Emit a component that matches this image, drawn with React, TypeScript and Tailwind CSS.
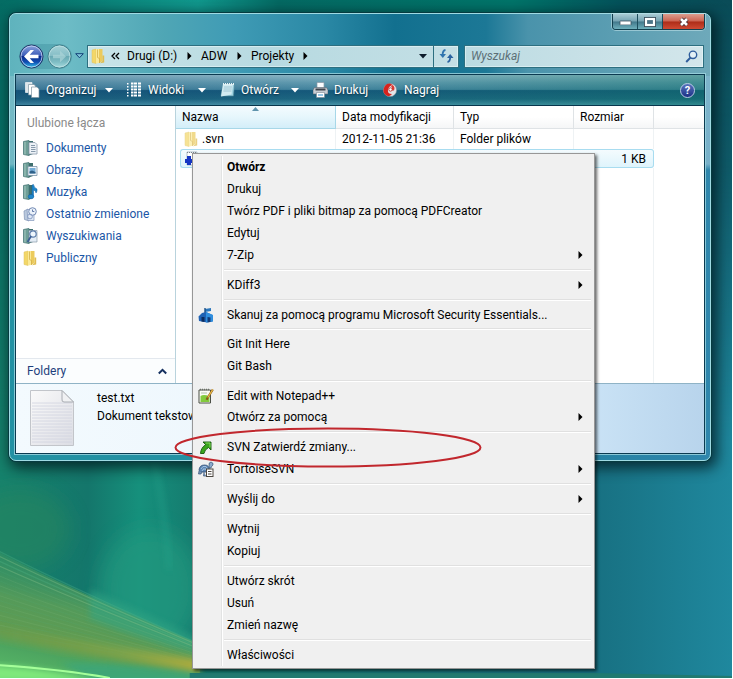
import React from "react";

/* ---------- small glyphs ---------- */

function ArrowRight({ className = "text-black" }: { className?: string }) {
  return (
    <svg width="5" height="8" viewBox="0 0 5 8" className={className} aria-hidden="true">
      <path d="M0.5 0 L4.5 4 L0.5 8 Z" fill="currentColor" />
    </svg>
  );
}

function CaretDown({ className = "" }: { className?: string }) {
  return (
    <svg width="8" height="5" viewBox="0 0 8 5" className={className} aria-hidden="true">
      <path d="M0 0 H8 L4 4.5 Z" fill="currentColor" />
    </svg>
  );
}

function FolderIcon({ pale = false }: { pale?: boolean }) {
  return (
    <svg width="14" height="16" viewBox="0 0 14 16" aria-hidden="true" className={pale ? "opacity-70" : ""}>
      <path d="M1 2 L5 1 V15.5 L1 14.5 Z" fill="#f3d768" stroke="#dcc160" strokeWidth="0.5" />
      <path d="M5 1 H8 V15 L5 15.5 Z" fill="#fbe997" />
      <path d="M8 1 H11.5 V13 L8 15 Z" fill="#eccb5c" />
      <path d="M6.500 1.500 V9.500 L8.500 10.500 V15" fill="none" stroke="#d3b04a" strokeWidth="0.8" />
      <path d="M11.500 7.500 H13.200 V14.500 L9 15.300 L11.500 13 Z" fill="#e0bd50" />
    </svg>
  );
}

type LinkKind = "doc" | "pic" | "music" | "recent" | "search" | "public";

function LinkIcon({ kind }: { kind: LinkKind }) {
  if (kind === "public") {
    return (
      <span className="flex w-[15px]">
        <FolderIcon />
      </span>
    );
  }
  if (kind === "recent") {
    return (
      <svg width="15" height="16" viewBox="0 0 15 16" aria-hidden="true">
        <path d="M1 5 L5 3 L6 15 L1.5 13.500 Z" fill="#b9c8dd" stroke="#7f93b5" strokeWidth="0.7" />
        <path d="M4 3.5 H9 L11 5 V14.500 H5 Z" fill="#dfe8f5" stroke="#8397ba" strokeWidth="0.7" />
        <circle cx="9.5" cy="5.5" r="3.8" fill="#eaf1fa" stroke="#7289b3" />
        <path d="M9.5 3.5 V5.5 H11.3" fill="none" stroke="#415f95" strokeWidth="0.8" />
        <circle cx="7" cy="10.5" r="2.4" fill="none" stroke="#8ca0c6" />
      </svg>
    );
  }
  return (
    <svg width="15" height="16" viewBox="0 0 15 16" aria-hidden="true">
      <path d="M0.5 1.5 L6 0.5 V15.5 L0.5 14.5 Z" fill="#6e9f97" stroke="#4b7a78" strokeWidth="0.8" />
      <path d="M2 2 V14.3" stroke="#a5c8c0" strokeWidth="1" />
      <path d="M6 1 H10 V14 L6 15.5 Z" fill="#3f706e" />
      {kind === "doc" && (
        <g>
          <path d="M6 2.5 H12 L14 4.5 V14 H6 Z" fill="#edf2f7" stroke="#8a9bab" strokeWidth="0.8" />
          <path d="M8 5.5 H12 M8 7.5 H12.5 M8 9.5 H12.5 M8 11.5 H12.5" stroke="#7c8ea1" strokeWidth="0.9" />
        </g>
      )}
      {kind === "pic" && (
        <g>
          <path d="M5 4.5 H14 V13.5 H5 Z" fill="#f2f7fb" stroke="#7f95a8" strokeWidth="0.8" />
          <path d="M6.5 6 H12.5 V11.5 H6.5 Z" fill="#76add6" />
          <path d="M6.5 9.5 L9 8.5 L12.5 10 V11.5 H6.5 Z" fill="#2f6088" />
        </g>
      )}
      {kind === "music" && (
        <g fill="#1e86cb" stroke="#0f5d9c" strokeWidth="0.5">
          <path d="M9 1 L10.5 0.5 Q11 4 14 5 Q14.5 7 13 9 Q13 6.5 10.5 6 V12.5 H9 Z" />
          <ellipse cx="8" cy="12.6" rx="2.8" ry="2.2" />
        </g>
      )}
      {kind === "search" && (
        <g>
          <path d="M6 2.5 H14 V14 H6 Z" fill="#e4edf6" stroke="#8a9bab" strokeWidth="0.7" />
          <circle cx="10" cy="6" r="3.2" fill="#eef6fd" stroke="#5b7ba8" strokeWidth="1.2" />
          <path d="M8 8.3 L4.5 14" stroke="#3c5f95" strokeWidth="1.8" />
        </g>
      )}
    </svg>
  );
}

function NavBall({ dim = false }: { dim?: boolean }) {
  const id = dim ? "ballForward" : "ballBack";
  return (
    <svg width="25" height="25" viewBox="0 0 25 25" aria-hidden="true">
      <defs>
        <linearGradient id={id} x1="0" y1="0" x2="0" y2="1">
          <stop offset="0" stopColor={dim ? "#a6d2d7" : "#8ea5de"} />
          <stop offset="0.46" stopColor={dim ? "#86bec7" : "#3c5cb8"} />
          <stop offset="0.5" stopColor={dim ? "#6aaab4" : "#0b2a8c"} />
          <stop offset="0.75" stopColor={dim ? "#80bec5" : "#1250b4"} />
          <stop offset="1" stopColor={dim ? "#a8dcdf" : "#35d0f0"} />
        </linearGradient>
      </defs>
      <circle cx="12.5" cy="12.5" r="11.5" fill={`url(#${id})`} stroke={dim ? "#3f7d89" : "#1e3568"} strokeWidth="1" />
      <circle cx="12.5" cy="12.5" r="10.5" fill="none" stroke={dim ? "#c0e2e5" : "#c9d7f2"} strokeWidth="1" opacity="0.8" />
      {dim ? (
        <path d="M19 12.5 L13 6.8 V10.8 H6 V14.2 H13 V18.2 Z" fill="#a9d3d7" opacity="0.75" />
      ) : (
        <path d="M5 12.5 L11.5 6 H15 L10.8 10.8 H19.5 V14.2 H10.8 L15 19 H11.5 Z" fill="#fff" />
      )}
    </svg>
  );
}

/* ---------- wallpaper ---------- */

function Wallpaper() {
  const rays = Array.from({ length: 17 }, (_, i) => i);
  return (
    <svg
      className="absolute inset-0 h-full w-full"
      viewBox="0 0 733 679"
      preserveAspectRatio="none"
      aria-hidden="true"
    >
      <defs>
        <linearGradient id="wpBase" x1="0" y1="0" x2="1" y2="0">
          <stop offset="0" stopColor="#16826c" />
          <stop offset="0.12" stopColor="#14766b" />
          <stop offset="0.19" stopColor="#16907c" />
          <stop offset="0.27" stopColor="#157a6e" />
          <stop offset="0.8" stopColor="#176f80" />
          <stop offset="1" stopColor="#1f889e" />
        </linearGradient>
        <linearGradient id="wpTop" x1="0" y1="0" x2="1" y2="0">
          <stop offset="0" stopColor="#046b63" />
          <stop offset="0.27" stopColor="#10998e" />
          <stop offset="0.38" stopColor="#046a63" />
          <stop offset="0.7" stopColor="#00756a" />
          <stop offset="0.85" stopColor="#04525a" />
          <stop offset="1" stopColor="#0a4b57" />
        </linearGradient>
        <linearGradient id="wpFade" x1="0" y1="0" x2="0" y2="1">
          <stop offset="0" stopColor="#fff" />
          <stop offset="0.25" stopColor="#bbb" />
          <stop offset="0.65" stopColor="#000" />
        </linearGradient>
        <mask id="wpMask">
          <rect width="733" height="679" fill="url(#wpFade)" />
        </mask>
        <linearGradient id="wpGreen" gradientUnits="userSpaceOnUse" x1="30" y1="550" x2="0" y2="690">
          <stop offset="0" stopColor="#2f9168" stopOpacity="0.5" />
          <stop offset="0.35" stopColor="#539a5a" />
          <stop offset="0.6" stopColor="#629c50" />
          <stop offset="0.7" stopColor="#4da560" />
          <stop offset="1" stopColor="#5fc46c" />
        </linearGradient>
        <linearGradient id="wpGold" x1="0" y1="0" x2="1" y2="0">
          <stop offset="0" stopColor="#7e9a3e" stopOpacity="0.2" />
          <stop offset="0.6" stopColor="#84a548" stopOpacity="0.7" />
          <stop offset="1" stopColor="#b0ac3c" />
        </linearGradient>
        <filter id="soft" x="-30%" y="-30%" width="160%" height="160%">
          <feGaussianBlur stdDeviation="10" />
        </filter>
        <filter id="softer" x="-20%" y="-20%" width="140%" height="140%">
          <feGaussianBlur stdDeviation="3" />
        </filter>
      </defs>
      <rect width="733" height="679" fill="url(#wpBase)" />
      <rect width="733" height="679" fill="url(#wpTop)" mask="url(#wpMask)" />
      <ellipse cx="150" cy="590" rx="50" ry="60" fill="#22997f" opacity="0.7" filter="url(#soft)" />
      <ellipse cx="20" cy="530" rx="50" ry="40" fill="#27855f" opacity="0.6" filter="url(#soft)" />
      <path d="M155 462 Q166 520 170 570" stroke="#27a78f" strokeWidth="4" fill="none" opacity="0.5" filter="url(#softer)" />
      <path d="M-5 551 Q70 590 200 645 V700 H-20 Z" fill="url(#wpGreen)" />
      <path d="M90 590 L200 640 V655 Q140 640 90 620 Z" fill="#32a483" opacity="0.6" filter="url(#softer)" />
      <path d="M60 664 Q120 664 200 672 V690 H110 Z" fill="#3ba67c" opacity="0.8" filter="url(#softer)" />
      {rays.map((i) => (
        <path
          key={i}
          d={`M-5 ${550 + i * 5} Q70 ${588 + i * 3.6} 200 ${645 + i * 1.6}`}
          stroke={i % 2 ? "#8fc78c" : "#4fb183"}
          strokeWidth={i < 4 ? 1.2 : 0.7}
          opacity={i < 4 ? 0.35 : 0.2}
          fill="none"
        />
      ))}
      <path d="M-5 628 Q90 642 200 661 V673 Q90 656 -5 640 Z" fill="url(#wpGold)" filter="url(#softer)" />
      <path d="M-10 666 Q50 670 100 682 H-10 Z" fill="#7fe97c" filter="url(#softer)" />
      <path d="M-5 666 Q60 670 110 679" stroke="#a5ff9a" strokeWidth="2" fill="none" />
      <path d="M190 674 H595 L733 677 V679 H190 Z" fill="#217a70" />
    </svg>
  );
}

/* ---------- window title controls ---------- */

function WindowControls() {
  return (
    <div className="flex h-4 overflow-hidden rounded-b-[4px] border border-t-0 border-[#123f4e] shadow-[0_0_0_1px_rgba(190,225,232,0.6)]">
      <button
        type="button"
        aria-label="Minimalizuj"
        className="flex w-[25px] items-center justify-center border-r border-[#1c4d5c] bg-[linear-gradient(#a9cbd4,#74a3b2_48%,#41788b_52%,#6fb0bc)]"
      >
        <svg width="13" height="7" viewBox="0 0 13 7" aria-hidden="true">
          <rect x="1" y="3" width="11" height="4" rx="0.5" fill="#fff" stroke="#3a4f5d" strokeWidth="0.8" />
        </svg>
      </button>
      <button
        type="button"
        aria-label="Maksymalizuj"
        className="flex w-[25px] items-center justify-center border-r border-[#1c4d5c] bg-[linear-gradient(#a9cbd4,#74a3b2_48%,#41788b_52%,#6fb0bc)]"
      >
        <svg width="12" height="10" viewBox="0 0 12 10" aria-hidden="true">
          <rect x="2" y="2" width="8" height="6" fill="none" stroke="#3a4f5d" strokeWidth="4" />
          <rect x="2" y="2" width="8" height="6" fill="#4c7487" stroke="#fff" strokeWidth="2.2" />
        </svg>
      </button>
      <button
        type="button"
        aria-label="Zamknij"
        className="flex w-[41px] items-center justify-center bg-[linear-gradient(#dd9d8e,#cc6350_48%,#ad2c18_52%,#cf4a33)]"
      >
        <svg width="12" height="10" viewBox="0 0 12 10" aria-hidden="true">
          <path d="M3 2 L9 8 M9 2 L3 8" stroke="#4a3036" strokeWidth="4.4" />
          <path d="M3 2 L9 8 M9 2 L3 8" stroke="#fff" strokeWidth="2.6" />
        </svg>
      </button>
    </div>
  );
}

/* ---------- address bar ---------- */

function AddressRow() {
  const crumbs = [
    { label: "Drugi (D:)", width: "w-[74px]" },
    { label: "ADW", width: "w-[50px]" },
    { label: "Projekty", width: "w-[66px]" },
  ];
  return (
    <div className="flex h-[32px] items-center pr-px pl-1">
      <div className="flex h-[25px] items-center gap-[3px] rounded-full bg-[#3c8c9c]/40">
        <button type="button" aria-label="Wstecz">
          <NavBall />
        </button>
        <button type="button" aria-label="Dalej">
          <NavBall dim />
        </button>
      </div>
      <button type="button" aria-label="Ostatnie strony" className="flex w-[15px] justify-center">
        <svg width="9" height="6" viewBox="0 0 9 6" aria-hidden="true">
          <path d="M0.7 0.7 H8.3 L4.5 4.8 Z" fill="#7fc5da" stroke="#123f78" />
        </svg>
      </button>
      <nav
        aria-label="Adres"
        className="flex h-[23px] w-[372px] shrink-0 items-center border border-[#2d6f80] bg-[linear-gradient(90deg,#c9e4e8,#b7dae1_50%,#c4dfe5)] shadow-[inset_0_0_0_1px_rgba(235,250,252,0.55)]"
      >
        <span className="flex w-[20px] justify-center">
          <FolderIcon />
        </span>
        <button type="button" aria-label="Poprzednie foldery" className="flex w-[19px] justify-center pr-1">
          <svg width="9" height="8" viewBox="0 0 9 8" aria-hidden="true">
            <path d="M4 1 L1 4 L4 7 M8 1 L5 4 L8 7" fill="none" stroke="#000" strokeWidth="1.3" />
          </svg>
        </button>
        {crumbs.map((c) => (
          <button key={c.label} type="button" className={`flex ${c.width} shrink-0 items-center justify-between pr-[9px]`}>
            <span>{c.label}</span>
            <ArrowRight />
          </button>
        ))}
        <button type="button" aria-label="Historia adresów" className="mr-[6px] ml-auto">
          <CaretDown className="text-[#0d1c2c]" />
        </button>
        <button
          type="button"
          aria-label="Odśwież"
          className="flex h-full w-[25px] items-center justify-center border-l border-[#2d6f80]"
        >
          <svg width="15" height="14" viewBox="0 0 15 14" aria-hidden="true">
            <path d="M6.5 1 Q3.6 1.4 3.6 6" fill="none" stroke="#2f74ae" strokeWidth="1.8" />
            <path d="M0.5 5 H7 L3.8 9 Z" fill="#2f74ae" />
            <path d="M8.5 13 Q11.2 12.6 11.2 8" fill="none" stroke="#2a62a0" strokeWidth="1.8" />
            <path d="M8 9 H14.5 L11.2 5 Z" fill="#2a62a0" />
          </svg>
        </button>
      </nav>
      <label className="ml-[5px] flex h-[23px] min-w-0 flex-1 items-center border border-[#2d6f80] bg-[linear-gradient(90deg,#bbdbe2,#d3e6eb)] pr-[5px] pl-[6px] shadow-[inset_0_0_0_1px_rgba(235,250,252,0.55)]">
        <input
          type="text"
          aria-label="Wyszukaj"
          placeholder="Wyszukaj"
          className="min-w-0 flex-1 bg-transparent italic outline-none placeholder:text-[#5d7077]"
        />
        <svg width="13" height="13" viewBox="0 0 13 13" aria-hidden="true">
          <circle cx="8" cy="4.8" r="3.7" fill="#e4f1f6" stroke="#2f5d9c" strokeWidth="1.4" />
          <path d="M5.4 7.6 L1.2 12" stroke="#2f5d9c" strokeWidth="2" />
        </svg>
      </label>
    </div>
  );
}

/* ---------- command bar ---------- */

function OrganizeIcon() {
  return (
    <svg width="15" height="16" viewBox="0 0 15 16" aria-hidden="true">
      <path d="M0.5 0.5 H7 V10.5 H0.5 Z" fill="#dfe6ea" stroke="#fff" strokeWidth="0.6" />
      <path d="M3.5 2.5 H9 L10.5 4 V13 H3.5 Z" fill="#fff" stroke="#7d94a1" strokeWidth="0.7" />
      <path d="M6.5 5 H12 L14 7 V15.5 H6.5 Z" fill="#fff" stroke="#7d94a1" strokeWidth="0.7" />
    </svg>
  );
}

function ViewsIcon() {
  const rows = [1, 4, 7, 10, 13];
  return (
    <svg width="15" height="16" viewBox="0 0 15 16" aria-hidden="true">
      {rows.map((y) => (
        <g key={y} fill="#fff">
          <rect x="0" y={y} width="1.5" height="1.5" />
          <rect x="4" y={y - 0.5} width="2.5" height="2" />
          <rect x="7" y={y - 0.5} width="3" height="2" />
          <rect x="11" y={y - 0.5} width="3" height="2" />
        </g>
      ))}
    </svg>
  );
}

function NotepadIcon() {
  return (
    <svg width="15" height="16" viewBox="0 0 15 16" aria-hidden="true">
      <path d="M3 2 H14.5 L13.5 14 H1 Z" fill="#9ed2e0" stroke="#4a8496" strokeWidth="0.7" />
      <path d="M3 2 H13 L11.5 12.5 L1 14.5 Z" fill="#d2ecf2" />
      <path d="M4 5 H12 M3.7 7 H11.8 M3.4 9 H11.5" stroke="#8fbccc" strokeWidth="0.8" />
      <path d="M3 2 H14.5" stroke="#e9f4f7" strokeWidth="2" strokeDasharray="1 1" />
    </svg>
  );
}

function PrinterIcon() {
  return (
    <svg width="15" height="16" viewBox="0 0 15 16" aria-hidden="true">
      <path d="M4 0.5 H11 V6 H4 Z" fill="#fbfdff" stroke="#8b98a5" strokeWidth="0.7" />
      <path d="M1.5 5.5 H13.5 L15 8 V12 H0 V8 Z" fill="#c9cdd3" stroke="#59636e" strokeWidth="0.6" />
      <path d="M2.5 6.5 H12.5 V8.5 H2.5 Z" fill="#3e454d" />
      <path d="M3.5 10.5 H11.5 V15.5 H3.5 Z" fill="#fff" stroke="#7a8793" strokeWidth="0.6" />
      <path d="M5 13 H10" stroke="#6db0dd" strokeWidth="1.4" />
    </svg>
  );
}

function BurnIcon() {
  return (
    <svg width="15" height="16" viewBox="0 0 15 16" aria-hidden="true">
      <circle cx="7" cy="8" r="6.6" fill="#e3e5e8" stroke="#7e8a94" strokeWidth="0.6" />
      <path d="M7 1.4 A6.6 6.6 0 0 0 4 13.800 Q7 15 9 12 Q4.500 12 5 8 Q6 3.5 10 3 Z" fill="#d6231e" />
      <path d="M9.500 3 Q12.500 5 11 8.500 H6 V7 H9 Q9.500 5 8 4.500 Z" fill="#dc3a33" />
      <circle cx="7.500" cy="7.500" r="1.700" fill="#fff" stroke="#b52a24" strokeWidth="0.8" />
    </svg>
  );
}

function CommandBar() {
  const items = [
    { label: "Organizuj", icon: <OrganizeIcon />, width: "w-[102px]", caret: true },
    { label: "Widoki", icon: <ViewsIcon />, width: "w-[93px]", caret: true },
    { label: "Otwórz", icon: <NotepadIcon />, width: "w-[93px]", caret: true },
    { label: "Drukuj", icon: <PrinterIcon />, width: "w-[70px]", caret: false },
    { label: "Nagraj", icon: <BurnIcon />, width: "w-[70px]", caret: false },
  ];
  return (
    <div
      role="toolbar"
      aria-label="Polecenia"
      className="relative flex h-[31px] items-center border-b border-[#07354c] bg-[linear-gradient(#8ab5c4,#5f99ae_25%,#42839d_48%,#15587a_52%,#1c6580_80%,#4591a6)] px-[9px] text-white"
    >
      <div className="absolute inset-0 bg-[linear-gradient(90deg,rgba(20,50,110,0.16),rgba(0,120,110,0)_45%,rgba(10,120,95,0.35))]" />
      {items.map((it) => (
        <button
          key={it.label}
          type="button"
          className={`relative flex ${it.width} shrink-0 items-center [text-shadow:0_1px_2px_#0a3040]`}
        >
          {it.icon}
          <span className="ml-[6px]">{it.label}</span>
          {it.caret && <CaretDown className="mr-[14px] ml-auto" />}
        </button>
      ))}
      <button type="button" aria-label="Pomoc" className="relative ml-auto">
        <span className="flex size-[15px] items-center justify-center rounded-full border border-[#b9cbe6] bg-[linear-gradient(#5874bd,#1c2f86)] text-[11px] leading-none font-bold">
          ?
        </span>
      </button>
    </div>
  );
}

/* ---------- favourites pane ---------- */

function Favourites() {
  const links: { label: string; kind: LinkKind }[] = [
    { label: "Dokumenty", kind: "doc" },
    { label: "Obrazy", kind: "pic" },
    { label: "Muzyka", kind: "music" },
    { label: "Ostatnio zmienione", kind: "recent" },
    { label: "Wyszukiwania", kind: "search" },
    { label: "Publiczny", kind: "public" },
  ];
  return (
    <aside className="flex w-[160px] shrink-0 flex-col border-r border-[#b9d3dd] bg-white">
      <h2 className="mt-[6px] pl-[11px] leading-[22px] text-[#8a8a8a]">Ulubione łącza</h2>
      <ul className="mt-[3px]">
        {links.map((l) => (
          <li key={l.label}>
            <a href="#" className="flex h-[22px] items-center gap-2 pl-[7px] text-[#1a56a6]">
              <LinkIcon kind={l.kind} />
              {l.label}
            </a>
          </li>
        ))}
      </ul>
      <button
        type="button"
        className="mt-auto flex h-[25px] items-center justify-between border-t border-[#e3e8ee] bg-[#fbfdfe] pr-[8px] pl-[11px] text-[#1e3f7c]"
      >
        Foldery
        <svg width="9" height="7" viewBox="0 0 9 7" aria-hidden="true">
          <path d="M0.8 5.5 L4.5 1.8 L8.2 5.5" fill="none" stroke="#15305f" strokeWidth="2" />
        </svg>
      </button>
    </aside>
  );
}

/* ---------- file list ---------- */

function FileList() {
  return (
    <table className="h-full min-w-0 flex-1 table-fixed border-separate border-spacing-0 bg-white text-left">
      <thead>
        <tr className="h-[23px]">
          <th className="relative w-[160px] border-r border-b border-[#a7d7e8] bg-[linear-gradient(#f4fbfe,#e6f6fc_50%,#d3eef9)] p-0 pl-[6px] font-normal">
            Nazwa
            <svg className="absolute top-px left-[76px]" width="7" height="4" viewBox="0 0 7 4" aria-hidden="true">
              <path d="M0 4 L3.5 0 L7 4 Z" fill="#5f94ad" />
            </svg>
          </th>
          <th className="w-[118px] border-r border-b border-[#dfe3e6] bg-[linear-gradient(#fff_50%,#f5f6f7)] p-0 pl-[6px] font-normal">
            Data modyfikacji
          </th>
          <th className="w-[120px] border-r border-b border-[#dfe3e6] bg-[linear-gradient(#fff_50%,#f5f6f7)] p-0 pl-[6px] font-normal">
            Typ
          </th>
          <th className="w-[80px] border-r border-b border-[#dfe3e6] bg-[linear-gradient(#fff_50%,#f5f6f7)] p-0 pl-[6px] font-normal">
            Rozmiar
          </th>
          <th aria-hidden="true" className="border-b border-[#dfe3e6] bg-[linear-gradient(#fff_50%,#f5f6f7)] p-0" />
        </tr>
      </thead>
      <tbody>
        <tr className="h-[20px]">
          <td className="border-r border-[#eef2f4] p-0 pl-[8px]">
            <span className="flex items-center gap-1">
              <FolderIcon pale />
              .svn
            </span>
          </td>
          <td className="border-r border-[#eef2f4] p-0 pl-[6px] whitespace-nowrap">2012-11-05 21:36</td>
          <td className="border-r border-[#eef2f4] p-0 pl-[6px]">Folder plików</td>
          <td className="border-r border-[#eef2f4] p-0" />
          <td className="p-0" />
        </tr>
        <tr className="h-[19px]">
          <td className="p-0 pl-[4px]">
            <span className="flex h-[19px] items-center rounded-l-[3px] border border-r-0 border-[#a8dcf0] bg-[linear-gradient(#f4fbfe,#dff4fc)] pl-[3px]">
              <svg width="14" height="15" viewBox="0 0 14 15" aria-hidden="true">
                <path d="M3 1 H13 V14 H3 Z" fill="#fff" stroke="#9aa8b4" strokeWidth="0.7" />
                <path d="M3 1.5 H13" stroke="#7b8790" strokeDasharray="1 1" />
                <path d="M3 5 H7 V8 H9 V12 H7 V14 H3 V12 H1 V8 H3 Z" fill="#1636c4" />
              </svg>
            </span>
          </td>
          <td className="border-y border-[#a8dcf0] bg-[linear-gradient(#f4fbfe,#dff4fc)] p-0" />
          <td className="border-y border-[#a8dcf0] bg-[linear-gradient(#f4fbfe,#dff4fc)] p-0" />
          <td className="rounded-r-[3px] border border-l-0 border-[#a8dcf0] bg-[linear-gradient(#f4fbfe,#dff4fc)] p-0 pr-[7px] text-right">
            1 KB
          </td>
          <td className="p-0" />
        </tr>
        <tr aria-hidden="true">
          <td className="border-r border-[#eef2f4] p-0" />
          <td className="border-r border-[#eef2f4] p-0" />
          <td className="border-r border-[#eef2f4] p-0" />
          <td className="border-r border-[#eef2f4] p-0" />
          <td className="p-0" />
        </tr>
      </tbody>
    </table>
  );
}

/* ---------- details pane ---------- */

function Details() {
  return (
    <footer className="flex h-[70px] border-t border-[#8fb3c6] bg-[linear-gradient(90deg,#f3fafe,#eef7fd_30%,#c9e2f5_84%,#b8d4ec)] pl-[14px]">
      <svg width="44" height="58" viewBox="0 0 44 58" className="mt-[6px]" aria-hidden="true">
        <defs>
          <linearGradient id="sheet" x1="0" y1="0" x2="1" y2="1">
            <stop offset="0" stopColor="#fafafa" />
            <stop offset="1" stopColor="#dcdde4" />
          </linearGradient>
        </defs>
        <path d="M0.5 0.5 H32 L43.5 12 V55.5 H0.5 Z" fill="url(#sheet)" stroke="#c2c5ca" />
        {Array.from({ length: 14 }, (_, i) => (
          <path key={i} d={`M2 ${13 + i * 3} H42`} stroke="#d0d3e0" strokeWidth="0.8" />
        ))}
        <path d="M32 0.5 L43.5 12 H34 Q31.500 12 32 9 Z" fill="#f0f1f3" stroke="#a8acb2" />
      </svg>
      <div className="ml-[23px] pt-[5px] leading-[18px]">
        <p>test.txt</p>
        <p>Dokument tekstowy</p>
      </div>
    </footer>
  );
}

/* ---------- context menu ---------- */

function ShieldHouse() {
  return (
    <svg width="16" height="16" viewBox="0 0 16 16" aria-hidden="true">
      <path d="M7 2 L13 1 V4 L7 5 Z" fill="#2d78bd" />
      <path d="M7 1 V7" stroke="#1b4f87" strokeWidth="1.4" />
      <path d="M0.500 9.500 L4 6 L8 5 L14.500 8 V14.500 L9 15.500 L1 14 Z" fill="#1f62b4" />
      <path d="M8 5 L15 8 V14.500 L8 15.500 Z" fill="#2f8ede" />
      <path d="M3.500 10 H6.500 V15 L3.500 14.500 Z" fill="#0d2d5e" />
      <path d="M9.500 10 L12.500 10.500 V15 L9.500 15.300 Z" fill="#123a78" />
    </svg>
  );
}

function NotepadPlus() {
  return (
    <svg width="16" height="16" viewBox="0 0 16 16" aria-hidden="true">
      <path d="M1 2 H12.500 V15 H1 Z" fill="#fbfcf6" stroke="#4b4f45" />
      <path d="M2 1.500 H12" stroke="#6a6f66" strokeWidth="1.600" strokeDasharray="1 1" />
      <path d="M2.500 8 Q6 6 11.500 8.500 V14 H2.500 Z" fill="#83cb3d" />
      <path d="M3 5 H9" stroke="#b5c0b0" />
      <path d="M14.800 1.500 L9.500 10 L8.600 11.800" stroke="#8a5a18" strokeWidth="2.200" fill="none" />
      <path d="M14.800 1.500 L9.800 9.500" stroke="#efc04a" strokeWidth="1.200" />
    </svg>
  );
}

function CommitArrow() {
  return (
    <svg width="16" height="16" viewBox="0 0 16 16" aria-hidden="true">
      <path
        d="M5 3 H13 V11 L10.500 8.500 Q6.500 10.500 6 14.500 H2.500 Q3 8.500 7.700 5.700 Z"
        fill="#3aa51c"
        stroke="#14560b"
        strokeWidth="0.900"
      />
      <path d="M7.500 4 H12 V8.500" fill="none" stroke="#8fdc68" strokeWidth="0.900" />
    </svg>
  );
}

function Tortoise() {
  return (
    <svg width="16" height="16" viewBox="0 0 16 16" aria-hidden="true">
      <path d="M1 9 Q1.500 4 6.500 4 Q11.500 4 11.500 9.500 L9 11 H2 Z" fill="#5c85b4" stroke="#304d73" strokeWidth="0.800" />
      <path d="M3 8 L5 5.500 L8 5.500 L9.500 8 M5 8 H8 M4 10 L5.500 8 M9 10 L7.500 8" stroke="#b4cde8" strokeWidth="0.800" fill="none" />
      <path d="M11 5 Q10.500 1 13 1 Q15.500 1.500 15 4 Q13.500 5 13 7 H11.500 Z" fill="#8aa9cb" stroke="#3a5577" strokeWidth="0.700" />
      <path d="M1 10 L0.500 13 H3 L4 11 M6 11 L5.500 15 H8" fill="#7696bb" stroke="#3a5577" strokeWidth="0.700" />
      <rect x="8.500" y="8" width="6.500" height="7.500" fill="#fff" stroke="#4c4640" />
      <path d="M10 10.500 H13.500 M10 13 H13.500" stroke="#4c4640" />
    </svg>
  );
}

type Entry = {
  label: string;
  icon?: React.ReactNode;
  bold?: boolean;
  submenu?: boolean;
  short?: boolean;
};

const menuGroups: Entry[][] = [
  [
    { label: "Otwórz", bold: true },
    { label: "Drukuj" },
    { label: "Twórz PDF i pliki bitmap za pomocą PDFCreator" },
    { label: "Edytuj" },
    { label: "7-Zip", submenu: true },
  ],
  [{ label: "KDiff3", submenu: true }],
  [{ label: "Skanuj za pomocą programu Microsoft Security Essentials...", icon: <ShieldHouse />, short: true }],
  [{ label: "Git Init Here" }, { label: "Git Bash" }],
  [
    { label: "Edit with Notepad++", icon: <NotepadPlus />, short: true },
    { label: "Otwórz za pomocą", submenu: true },
  ],
  [
    { label: "SVN Zatwierdź zmiany...", icon: <CommitArrow /> },
    { label: "TortoiseSVN", icon: <Tortoise />, submenu: true },
  ],
  [{ label: "Wyślij do", submenu: true }],
  [{ label: "Wytnij" }, { label: "Kopiuj" }],
  [{ label: "Utwórz skrót" }, { label: "Usuń" }, { label: "Zmień nazwę" }],
  [{ label: "Właściwości" }],
];

function ContextMenu() {
  return (
    <div
      role="menu"
      aria-label="Menu podręczne"
      className="absolute top-[153px] left-[192px] w-[403px] border border-[#979797] bg-[#f0f0f0] py-[2px] shadow-[2px_2px_3px_rgba(0,0,0,0.6)]"
    >
      {menuGroups.map((group, g) => (
        <div key={group[0].label} role="group" className="grid grid-cols-[29px_1fr]">
          <div className="row-start-1 border-r border-[#e2e3e3]" />
          <div className="row-start-1 border-l border-white">
            {group.map((e) => (
              <button
                key={e.label}
                type="button"
                role="menuitem"
                className={`relative flex w-full items-center justify-between pr-[11px] pl-[4px] text-left whitespace-nowrap ${
                  e.short ? "h-[21px]" : "h-[22px]"
                } ${e.bold ? "font-bold" : ""}`}
              >
                {e.icon && <span className="absolute -left-[25px]">{e.icon}</span>}
                {e.label}
                {e.submenu && <ArrowRight />}
              </button>
            ))}
          </div>
          {g < menuGroups.length - 1 && (
            <>
              <div className="row-start-2 h-2 border-r border-[#e2e3e3]" />
              <div className="row-start-2 h-2 border-l border-white py-[3px] pr-[3px] pl-px">
                <hr className="h-[2px] border-0 border-t border-[#e0e0e0] bg-white" />
              </div>
            </>
          )}
        </div>
      ))}
    </div>
  );
}

function RedMark() {
  return (
    <svg
      className="pointer-events-none absolute top-[426px] left-[174px]"
      width="309"
      height="43"
      viewBox="0 0 309 43"
      aria-hidden="true"
    >
      <ellipse cx="154" cy="21.5" rx="152.500" ry="19" fill="none" stroke="#c1272d" strokeWidth="2" />
    </svg>
  );
}

/* ---------- page ---------- */

export default function App() {
  return (
    <div className="relative min-h-screen overflow-hidden border-r border-b border-white font-[Roboto,'Open_Sans',sans-serif] text-[12px] leading-[16px] text-black">
      <Wallpaper />
      <main className="absolute top-[13px] right-[21px] left-[9px] rounded-[7px] border border-[#9fdbe3] bg-[linear-gradient(rgba(255,255,255,0.4),rgba(255,255,255,0.35)_150px,rgba(255,255,255,0)_156px),linear-gradient(90deg,#2391a3,#2391a3_40%,#1f7f9c_70%,#2f86ac)] px-[5px] pb-[6px] shadow-[0_0_0_1px_#063b40,3px_4px_14px_3px_rgba(0,20,25,0.75)]">
        <div className="absolute inset-x-0 top-0 h-[62px] rounded-t-[6px] bg-[linear-gradient(90deg,#5fb3bd,#6dbcc6_8%,#4fa6b5_22%,#3f9bb5_32%,#2a88a5_45%,#12708f_55%,#1c7896_68%,#4a93ab_74%,#5d9fb3_88%,#6ea9ba)]" />
        <div className="relative">
          <header className="flex h-[26px] items-start justify-end">
            <WindowControls />
          </header>
          <AddressRow />
          <div className="mt-[2px] border border-[#0b3a50] shadow-[0_0_0_1px_rgba(160,215,225,0.8)]">
            <CommandBar />
            <div className="flex h-[277px]">
              <Favourites />
              <FileList />
            </div>
            <Details />
          </div>
        </div>
      </main>
      <ContextMenu />
      <RedMark />
    </div>
  );
}
